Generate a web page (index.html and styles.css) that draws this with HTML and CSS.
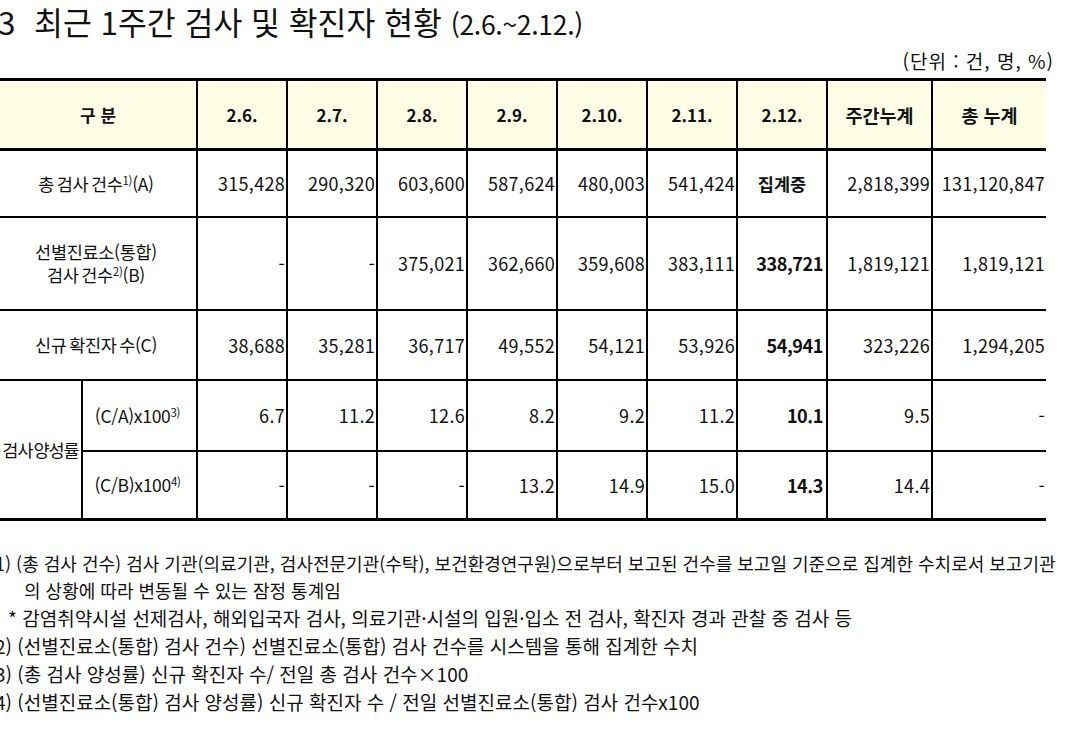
FILE: index.html
```html
<!DOCTYPE html>
<html lang="ko">
<head>
<meta charset="utf-8">
<title>최근 1주간 검사 및 확진자 현황</title>
<link rel="stylesheet" href="styles.css">
</head>
<body>
<div class="page">
  <h1 class="title"><span class="title-num">3</span>최근 1주간 검사 및 확진자 현황 <span class="period">(2.6.~2.12.)</span></h1>
  <div class="unit">(단위 : 건, 명, %)</div>
  <table class="stats">
    <colgroup>
      <col class="c-sub1"><col class="c-sub2">
      <col class="c-day"><col class="c-day"><col class="c-day"><col class="c-day">
      <col class="c-day"><col class="c-day"><col class="c-day">
      <col class="c-week"><col class="c-total">
    </colgroup>
    <thead>
      <tr class="r-head">
        <th colspan="2">구 분</th>
        <th>2.6.</th><th>2.7.</th><th>2.8.</th><th>2.9.</th>
        <th>2.10.</th><th>2.11.</th><th>2.12.</th>
        <th class="kh">주간누계</th><th class="kh">총 누계</th>
      </tr>
    </thead>
    <tbody>
      <tr class="r-1">
        <td colspan="2" class="label">총 검사 건수<sup>1)</sup>(A)</td>
        <td class="n">315,428</td><td class="n">290,320</td><td class="n">603,600</td><td class="n">587,624</td>
        <td class="n">480,003</td><td class="n">541,424</td><td class="pending">집계중</td>
        <td class="n">2,818,399</td><td class="n">131,120,847</td>
      </tr>
      <tr class="r-2">
        <td colspan="2" class="label">선별진료소(통합)<br>검사 건수<sup>2)</sup>(B)</td>
        <td class="n">-</td><td class="n">-</td><td class="n">375,021</td><td class="n">362,660</td>
        <td class="n">359,608</td><td class="n">383,111</td><td class="n b">338,721</td>
        <td class="n">1,819,121</td><td class="n">1,819,121</td>
      </tr>
      <tr class="r-3">
        <td colspan="2" class="label">신규 확진자 수(C)</td>
        <td class="n">38,688</td><td class="n">35,281</td><td class="n">36,717</td><td class="n">49,552</td>
        <td class="n">54,121</td><td class="n">53,926</td><td class="n b">54,941</td>
        <td class="n">323,226</td><td class="n">1,294,205</td>
      </tr>
      <tr class="r-4">
        <td rowspan="2" class="label group">검사 양성률</td>
        <td class="label">(C/A)x100<sup>3)</sup></td>
        <td class="n">6.7</td><td class="n">11.2</td><td class="n">12.6</td><td class="n">8.2</td>
        <td class="n">9.2</td><td class="n">11.2</td><td class="n b">10.1</td>
        <td class="n">9.5</td><td class="n">-</td>
      </tr>
      <tr class="r-5">
        <td class="label">(C/B)x100<sup>4)</sup></td>
        <td class="n">-</td><td class="n">-</td><td class="n">-</td><td class="n">13.2</td>
        <td class="n">14.9</td><td class="n">15.0</td><td class="n b">14.3</td>
        <td class="n">14.4</td><td class="n">-</td>
      </tr>
    </tbody>
  </table>
  <div class="notes">
    <div class="note">1) (총 검사 건수) 검사 기관(의료기관, 검사전문기관(수탁), 보건환경연구원)으로부터 보고된 건수를 보고일 기준으로 집계한 수치로서 보고기관</div>
    <div class="note cont">의 상황에 따라 변동될 수 있는 잠정 통계임</div>
    <div class="note wide star">* 감염취약시설 선제검사, 해외입국자 검사, 의료기관·시설의 입원·입소 전 검사, 확진자 경과 관찰 중 검사 등</div>
    <div class="note wide">2) (선별진료소(통합) 검사 건수) 선별진료소(통합) 검사 건수를 시스템을 통해 집계한 수치</div>
    <div class="note wide">3) (총 검사 양성률) 신규 확진자 수/ 전일 총 검사 건수×100</div>
    <div class="note wide">4) (선별진료소(통합) 검사 양성률) 신규 확진자 수 / 전일 선별진료소(통합) 검사 건수x100</div>
  </div>
</div>
</body>
</html>
```

FILE: styles.css
```css
html, body {
  margin: 0;
  padding: 0;
  background: #ffffff;
}
body {
  font-family: "Noto Sans CJK KR", "Noto Sans", sans-serif;
  color: #111111;
  overflow: hidden;
}
.page {
  width: 1080px;
  height: 740px;
  overflow: hidden;
}
.title {
  margin: 0 0 0 -2px;
  padding-top: 3px;
  height: 41px;
  font-size: 31.4px;
  font-weight: 400;
  line-height: 38px;
  white-space: nowrap;
  color: #111;
}
.title-num {
  display: inline-block;
  width: 36px;
}
.period {
  font-size: 26.5px;
  letter-spacing: -0.3px;
}
.unit {
  width: 1054px;
  text-align: right;
  font-size: 19px;
  letter-spacing: 1px;
  line-height: 34px;
  height: 34px;
}
.stats {
  border-collapse: collapse;
  table-layout: fixed;
  width: 1044px;
  border-top: 3px solid #000;
  border-bottom: 3px solid #000;
}
.c-sub1 { width: 82px; }
.c-sub2 { width: 115px; }
.c-day { width: 90px; }
.c-week { width: 105px; }
.c-total { width: 114px; }
.stats th, .stats td {
  border: 2px solid #000;
  padding: 0;
  vertical-align: middle;
  white-space: nowrap;
}
.stats tr > :first-child { border-left: none; }
.stats tr > :last-child { border-right: none; }
.stats .r-5 > :first-child { border-left: 2px solid #000; }
.stats th {
  background: #fefee6;
  font-size: 17px;
  font-weight: 700;
  text-align: center;
  border-bottom: 3px solid #000;
}
.stats th.kh { font-size: 18.5px; }
.r-head { height: 70px; }
.r-1 { height: 67px; }
.r-2 { height: 93px; }
.r-3 { height: 70px; }
.r-4 { height: 71px; }
.r-5 { height: 69px; }
.label {
  font-size: 17.5px;
  text-align: center;
  line-height: 23px;
  letter-spacing: -0.3px;
  word-spacing: -2px;
  padding-right: 4px !important;
}
.label sup {
  font-size: 11.5px;
  line-height: 0;
  vertical-align: 6px;
}
.group {
  letter-spacing: -1px;
  word-spacing: -3px;
  padding-right: 0 !important;
}
.n {
  font-size: 18px;
  text-align: right;
  padding-right: 1px !important;
  letter-spacing: 0.3px;
}
.n.b {
  font-weight: 700;
  letter-spacing: -0.4px;
  padding-right: 3px !important;
}
.pending {
  font-size: 17.5px;
  font-weight: 700;
  text-align: center;
}
.notes {
  margin: 28px 0 0 -5px;
}
.note {
  font-size: 18px;
  line-height: 28px;
  white-space: nowrap;
}
.note.wide { font-size: 19px; }
.note.cont { padding-left: 29px; line-height: 27px; }
.note.star { padding-left: 13px; }
```
